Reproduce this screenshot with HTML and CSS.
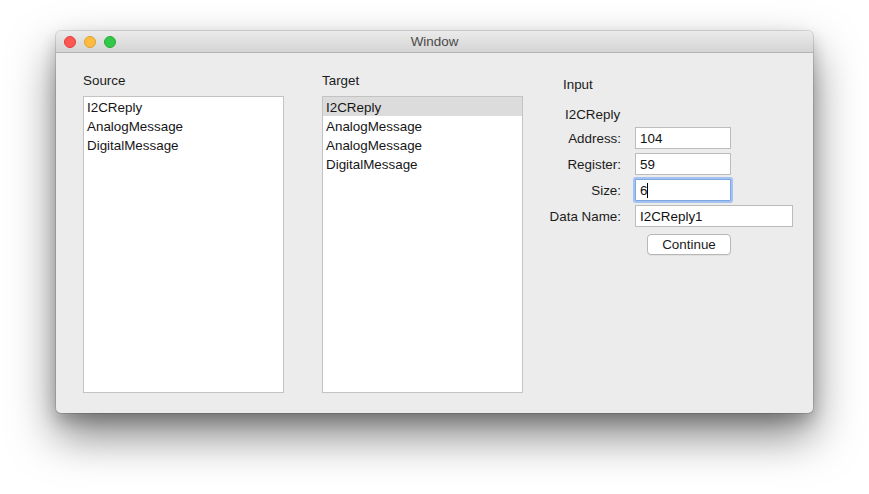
FILE: index.html
```html
<!DOCTYPE html>
<html>
<head>
<meta charset="utf-8">
<link rel="stylesheet" href="styles.css">
</head>
<body>
<div class="window">
  <div class="titlebar">
    <div class="lights">
      <span class="light red"></span>
      <span class="light yellow"></span>
      <span class="light green"></span>
    </div>
    <div class="title">Window</div>
  </div>
  <div class="content">
    <div class="column">
      <div class="col-label">Source</div>
      <ul class="list">
        <li>I2CReply</li>
        <li>AnalogMessage</li>
        <li>DigitalMessage</li>
      </ul>
    </div>
    <div class="column">
      <div class="col-label">Target</div>
      <ul class="list">
        <li class="selected">I2CReply</li>
        <li>AnalogMessage</li>
        <li>AnalogMessage</li>
        <li>DigitalMessage</li>
      </ul>
    </div>
    <div class="panel">
      <div class="panel-title">Input</div>
      <div class="panel-sub">I2CReply</div>
      <div class="form">
        <div class="f-label">Address:</div>
        <div class="field">104</div>
        <div class="f-label">Register:</div>
        <div class="field">59</div>
        <div class="f-label">Size:</div>
        <div class="field focused">6<span class="caret"></span></div>
        <div class="f-label">Data Name:</div>
        <div class="field wide">I2CReply1</div>
        <div></div>
        <div class="btn-row"><div class="button">Continue</div></div>
      </div>
    </div>
  </div>
</div>
</body>
</html>
```
FILE: styles.css
```css
html {
  margin: 0;
  padding: 0;
  height: 100%;
  background: #ffffff;
}
body {
  margin: 0;
  height: 100%;
  box-sizing: border-box;
  font-family: "Liberation Sans", Arial, sans-serif;
  font-size: 13.4px;
  color: #1b1b1b;
  padding: 31px 0 0 56px;
  background: #ffffff;
}
.window {
  width: 757px;
  height: 382px;
  background: #ececec;
  border-radius: 5px;
  box-shadow: 0 0 0 1px rgba(0,0,0,0.12), 0 22px 45px rgba(0,0,0,0.5), 0 8px 16px rgba(0,0,0,0.2);
  display: flex;
  flex-direction: column;
  overflow: hidden;
}
.titlebar {
  height: 22px;
  background: linear-gradient(#ebebeb, #d4d4d4);
  border-bottom: 1px solid #b3b3b3;
  position: relative;
  display: flex;
  align-items: center;
  justify-content: center;
  flex-shrink: 0;
  box-sizing: border-box;
}
.lights {
  position: absolute;
  left: 8px;
  top: 5px;
  display: flex;
  gap: 8px;
}
.light {
  width: 12px;
  height: 12px;
  border-radius: 50%;
  box-sizing: border-box;
}
.red { background: #fc5753; border: 1px solid #df3e3a; }
.yellow { background: #fdbc40; border: 1px solid #de9f34; }
.green { background: #34c84a; border: 1px solid #27aa35; }
.title {
  color: #4a4a4a;
  font-size: 13.4px;
  line-height: 16px;
  padding-top: 1px;
}
.content {
  flex: 1;
  display: flex;
  padding: 20px 0 0 27px;
}
.column {
  width: 201px;
  display: flex;
  flex-direction: column;
}
.column + .column {
  margin-left: 38px;
}
.col-label {
  line-height: 16px;
  height: 16px;
  margin-bottom: 7px;
}
.list {
  list-style: none;
  margin: 0;
  padding: 0;
  height: 297px;
  box-sizing: border-box;
  border: 1px solid #c3c3c3;
  background: #ffffff;
}
.list li {
  height: 19px;
  line-height: 21px;
  padding-left: 3px;
  color: #161616;
}
.list li.selected {
  background: #dcdcdc;
}
.panel {
  margin-left: 26px;
  display: flex;
  flex-direction: column;
  padding-top: 4px;
}
.panel-title {
  line-height: 16px;
  padding-left: 14px;
}
.panel-sub {
  line-height: 16px;
  padding-left: 16px;
  margin-top: 14px;
}
.form {
  margin-top: 4px;
  display: grid;
  grid-template-columns: 72px auto;
  column-gap: 14px;
  row-gap: 4px;
  align-items: center;
}
.f-label {
  text-align: right;
  line-height: 16px;
  padding-top: 1px;
}
.field {
  width: 96px;
  height: 22px;
  box-sizing: border-box;
  border: 1px solid #bcbcbc;
  background: #ffffff;
  line-height: 21px;
  padding-left: 4px;
  color: #111;
  position: relative;
}
.field.wide {
  width: 158px;
}
.field.focused {
  border-color: #7ea6e0;
  box-shadow: 0 0 0 2px #a4c3f2;
  border-radius: 1px;
}
.caret {
  display: inline-block;
  width: 1px;
  height: 15px;
  background: #000;
  vertical-align: -3px;
}
.btn-row {
  padding-top: 3px;
}
.button {
  margin-left: 12px;
  width: 84px;
  height: 21px;
  box-sizing: border-box;
  border: 1px solid #b7b7b7;
  border-radius: 4px;
  background: #ffffff;
  text-align: center;
  line-height: 19px;
  color: #1b1b1b;
  box-shadow: 0 1px 0 rgba(0,0,0,0.05);
}
```
